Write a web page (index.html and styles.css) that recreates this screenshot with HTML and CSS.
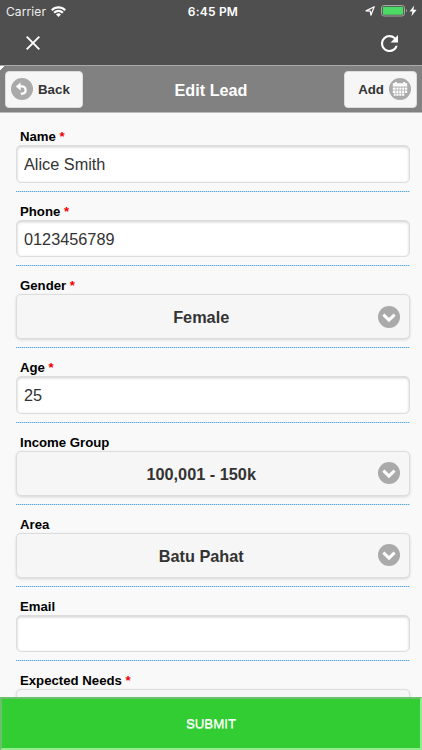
FILE: index.html
```html
<!DOCTYPE html>
<html lang="en">
<head>
    <meta charset="UTF-8">
    <meta name="viewport" content="width=device-width, initial-scale=1.0">
    <title>Edit Lead</title>
    <link rel="stylesheet" href="styles.css">
</head>
<body>
    <div class="topbar">
        <div class="status">
            <div class="carrier">
                <span>Carrier</span>
                <svg width="15" height="11" viewBox="0 0 15 11" fill="none" stroke="#fff" stroke-width="2.1">
                    <path d="M.8 4.2a9.4 9.4 0 0 1 13.4 0M3.1 6.7a6.2 6.2 0 0 1 8.8 0"/>
                    <path d="M7.5 11L5 8.5a3.5 3.5 0 0 1 5 0z" fill="#fff" stroke="none"/>
                </svg>
            </div>
            <div class="time">6:45 PM</div>
            <div class="battery">
                <svg width="53" height="12" viewBox="0 0 53 12">
                    <path d="M1 5.9L9.2 1.7L5.9 10.2L5.3 6.2Z" fill="none" stroke="#fff" stroke-width="1.2" stroke-linejoin="round"/>
                    <rect x="16.5" y=".5" width="23" height="10.5" rx="2.4" fill="none" stroke="#a5a5a5"/>
                    <rect x="17.8" y="1.8" width="20.4" height="7.9" rx="1" fill="#4cd964"/>
                    <path d="M41 4v3.2q1-.5 1-1.6t-1-1.6z" fill="#a5a5a5"/>
                    <path d="M49.2 .6L44.6 6.4h2.9L46.4 11.2L51.6 4.8h-3.2z" fill="#fff"/>
                </svg>
            </div>
        </div>
        <div class="tools">
            <svg width="14" height="14" viewBox="0 0 14 14" stroke="#fff" stroke-width="1.9">
                <path d="M.7 .7l12.6 12.6M13.3 .7L.7 13.3"/>
            </svg>
            <svg width="17" height="17" viewBox="0 0 16 16" fill="#fff">
                <path d="M13.65 2.35A7.96 7.96 0 0 0 8 0a8 8 0 1 0 7.73 10h-2.08A6 6 0 1 1 8 2c1.66 0 3.14.69 4.22 1.78L9 7h7V0z"/>
            </svg>
        </div>
    </div>

    <div class="header">
        <div class="btn">
            <svg width="22" height="22" viewBox="0 0 22 22">
                <circle cx="11" cy="11" r="11" fill="#aaa"/>
                <path d="M8 8.4H11.5a3.7 3.7 0 0 1 .5 7.2H9.8" fill="none" stroke="#fff" stroke-width="2.2"/>
                <path d="M4.8 8.4L9.6 4.4v8z" fill="#fff"/>
            </svg>
            <span>Back</span>
        </div>
        <h1>Edit Lead</h1>
        <div class="btn">
            <span>Add</span>
            <svg width="22" height="22" viewBox="0 0 22 22">
                <circle cx="11" cy="11" r="11" fill="#aaa"/>
                <path d="M3.8 5.2h2V4h2v1.2h6.4V4h2v1.2h2v3.3H3.8z" fill="#fff"/>
                <path d="M3.8 9.4h2.8v2.4H3.8zM7.3 9.4h2.2v2.4H7.3zM10.2 9.4h2.2v2.4h-2.2zM13.1 9.4h2.2v2.4h-2.2zM16 9.4h2.2v2.4H16zM3.8 12.5h2.8v2.4H3.8zM7.3 12.5h2.2v2.4H7.3zM10.2 12.5h2.2v2.4h-2.2zM13.1 12.5h2.2v2.4h-2.2zM16 12.5h2.2v2.4H16zM4.8 15.6h1.8v2.2H4.8zM7.3 15.6h2.2v2.2H7.3zM10.2 15.6h2.2v2.2h-2.2zM13.1 15.6h2.2v2.2h-2.2z" fill="#fff"/>
            </svg>
        </div>
    </div>

    <form class="lead-form">
        <div class="field">
            <label for="name">Name <b>*</b></label>
            <input type="text" id="name" value="Alice Smith">
        </div>
        <div class="field">
            <label for="phone">Phone <b>*</b></label>
            <input type="text" id="phone" value="0123456789">
        </div>
        <div class="field">
            <label>Gender <b>*</b></label>
            <div class="select">
                <span>Female</span>
                <svg width="22" height="22" viewBox="0 0 22 22"><circle cx="11" cy="11" r="11" fill="#aaa"/><path d="M5.4 8.6l5.6 5.5 5.6-5.5" fill="none" stroke="#fff" stroke-width="3"/></svg>
            </div>
        </div>
        <div class="field">
            <label for="age">Age <b>*</b></label>
            <input type="text" id="age" value="25">
        </div>
        <div class="field">
            <label>Income Group</label>
            <div class="select">
                <span>100,001 - 150k</span>
                <svg width="22" height="22" viewBox="0 0 22 22"><circle cx="11" cy="11" r="11" fill="#aaa"/><path d="M5.4 8.6l5.6 5.5 5.6-5.5" fill="none" stroke="#fff" stroke-width="3"/></svg>
            </div>
        </div>
        <div class="field">
            <label>Area</label>
            <div class="select">
                <span>Batu Pahat</span>
                <svg width="22" height="22" viewBox="0 0 22 22"><circle cx="11" cy="11" r="11" fill="#aaa"/><path d="M5.4 8.6l5.6 5.5 5.6-5.5" fill="none" stroke="#fff" stroke-width="3"/></svg>
            </div>
        </div>
        <div class="field">
            <label for="email">Email</label>
            <input type="text" id="email">
        </div>
        <div class="field">
            <label>Expected Needs <b>*</b></label>
            <div class="select"></div>
        </div>
    </form>

    <button class="submit" type="button">SUBMIT</button>
</body>
</html>
```
FILE: styles.css
```css
* {
    box-sizing: border-box;
}
body {
    margin: 0;
    height: 750px;
    display: flex;
    flex-direction: column;
    overflow: hidden;
    background-color: #f9f9f9;
    font-family: "Liberation Sans", Arial, Helvetica, sans-serif;
}
svg {
    display: block;
    flex: none;
}
.topbar {
    height: 65px;
    flex: none;
    background-color: #4f4f4f;
    color: #fff;
}
.status {
    display: grid;
    grid-template-columns: 1fr auto 1fr;
    align-items: center;
    height: 22px;
    padding: 0 4px 0 6px;
    font-family: Inter, sans-serif;
    font-size: 12px;
}
.carrier {
    display: flex;
    align-items: center;
    gap: 5px;
    color: #eee;
    letter-spacing: 0.1px;
}
.time {
    padding-left: 2px;
    font-weight: 600;
    letter-spacing: 0.2px;
}
.battery {
    justify-self: end;
}
.tools {
    display: flex;
    justify-content: space-between;
    align-items: center;
    height: 42px;
    padding: 0 24px 0 26px;
}
.header {
    display: grid;
    grid-template-columns: 1fr auto 1fr;
    align-items: center;
    flex: none;
    height: 48px;
    padding: 0 5px;
    background: linear-gradient(135deg, #fff 3px, transparent 3px), #818181;
    border-top: 1px solid #aaa;
    border-bottom: 1px solid #bbb;
}
.header h1 {
    margin: 0;
    padding-top: 3px;
    color: #fff;
    font-size: 16.2px;
}
.btn {
    display: flex;
    align-items: center;
    justify-self: start;
    gap: 5px;
    height: 37px;
    padding: 0 12.5px 0 5px;
    border: 1px solid #ddd;
    border-radius: 4px;
    background-color: #f6f6f6;
    color: #333;
    font-size: 13.3px;
    font-weight: bold;
}
.btn span {
    padding-top: 1px;
}
.btn:last-child {
    justify-self: end;
    padding: 0 5px 0 13px;
}
.lead-form {
    flex: 1;
    min-height: 0;
    overflow: hidden;
    padding: 4px 12px 0 16.4px;
}
.field {
    padding: 11px 0 9px;
    background: repeating-linear-gradient(90deg, #5aaade 0 1px, #b9d9ee 1px 2px) left bottom / 100% 1px no-repeat;
}
label {
    display: block;
    height: 17px;
    padding-left: 3.6px;
    line-height: 17px;
    font-size: 13.2px;
    font-weight: bold;
    color: #000;
}
label b {
    color: #e00;
}
input {
    display: block;
    width: 100%;
    height: 37.6px;
    padding: 2px 6.6px 0;
    border: 1px solid #ddd;
    border-radius: 5px;
    background-color: #fff;
    box-shadow: inset 0 1px 3px rgba(0, 0, 0, 0.2);
    color: #333;
    font-family: inherit;
    font-size: 16.3px;
}
.select {
    position: relative;
    display: flex;
    align-items: center;
    justify-content: center;
    height: 45px;
    padding: 2px 24px 0 0;
    border: 1px solid #ddd;
    border-radius: 5px;
    background-color: #f6f6f6;
    box-shadow: 0 1px 3px rgba(0, 0, 0, 0.15);
    color: #333;
    font-size: 16.3px;
    font-weight: bold;
}
.select svg {
    position: absolute;
    top: 10.5px;
    right: 9px;
}
.submit {
    flex: none;
    height: 53px;
    padding: 0;
    border: 2px solid;
    border-color: #6cc06c #90ee90 #90ee90 #6cc06c;
    background-color: #32cd32;
    color: #fff;
    font-family: inherit;
    font-size: 13.3px;
    text-shadow: 0 1px 0 #c8f0c8;
}
```
